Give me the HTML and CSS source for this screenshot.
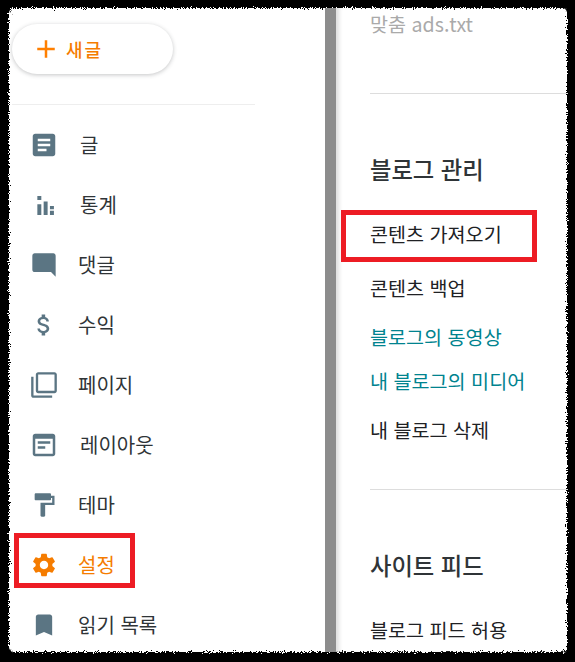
FILE: index.html
```html
<!DOCTYPE html>
<html lang="ko">
<head>
    <meta charset="UTF-8">
    <meta name="viewport" content="width=device-width, initial-scale=1.0">
    <title>설정</title>
    <link rel="stylesheet" href="styles.css">
</head>
<body>
    <svg class="defs" width="0" height="0">
        <filter id="rough" x="-5%" y="-5%" width="110%" height="110%">
            <feTurbulence type="fractalNoise" baseFrequency="0.9" numOctaves="2" seed="4"/>
            <feDisplacementMap in="SourceGraphic" scale="7"/>
        </filter>
    </svg>
    <div class="frame">
        <aside class="sidebar">
            <button class="new-post">
                <svg class="plus" viewBox="0 0 24 24"><path d="M19 13h-6v6h-2v-6H5v-2h6V5h2v6h6v2z"/></svg>
                <span>새글</span>
            </button>
            <hr class="side-line">
            <ul class="menu">
                <li class="wide">
                    <span class="icon"><svg class="big" viewBox="0 0 24 24"><path d="M19 3H5c-1.1 0-2 .9-2 2v14c0 1.1.9 2 2 2h14c1.1 0 2-.9 2-2V5c0-1.1-.9-2-2-2zm-5 14H7v-2h7v2zm3-4H7v-2h10v2zm0-4H7V7h10v2z"/></svg></span>
                    글
                </li>
                <li class="wide">
                    <span class="icon"><svg viewBox="0 0 24 24"><path d="M6.3 4.3h3.4v3.4H6.3zM6.3 11.4h3.4v9.2H6.3zM11.7 9h3.4v11.6h-3.4zM17.1 12.9h3.4v2.8h-3.4zM17.1 17h3.4v3.6h-3.4z"/></svg></span>
                    통계
                </li>
                <li>
                    <span class="icon"><svg viewBox="0 0 24 24"><path d="M21.99 4c0-1.1-.89-2-1.99-2H4c-1.1 0-2 .9-2 2v12c0 1.1.9 2 2 2h14l4 4-.01-18z"/></svg></span>
                    댓글
                </li>
                <li>
                    <span class="icon"><svg viewBox="0 0 24 24"><path d="M11.8 10.9c-2.27-.59-3-1.2-3-2.15 0-1.09 1.01-1.85 2.7-1.85 1.78 0 2.44.85 2.5 2.1h2.21c-.07-1.72-1.12-3.3-3.21-3.81V3h-3v2.16c-1.94.42-3.5 1.68-3.5 3.61 0 2.31 1.91 3.46 4.7 4.13 2.5.6 3 1.48 3 2.41 0 .69-.49 1.79-2.7 1.79-2.06 0-2.87-.92-2.98-2.1h-2.2c.12 2.19 1.76 3.42 3.68 3.83V21h3v-2.15c1.95-.37 3.5-1.5 3.5-3.55 0-2.84-2.43-3.81-4.7-4.4z"/></svg></span>
                    수익
                </li>
                <li>
                    <span class="icon"><svg viewBox="0 0 24 24"><path d="M3 5H1v16c0 1.1.9 2 2 2h16v-2H3V5zm18-4H7c-1.1 0-2 .9-2 2v14c0 1.1.9 2 2 2h14c1.1 0 2-.9 2-2V3c0-1.1-.9-2-2-2zm0 16H7V3h14v14z"/></svg></span>
                    페이지
                </li>
                <li class="wide">
                    <span class="icon"><svg class="big" viewBox="0 0 24 24"><path d="M19 3H5c-1.1 0-2 .9-2 2v14c0 1.1.9 2 2 2h14c1.1 0 2-.9 2-2V5c0-1.1-.9-2-2-2zm0 16H5V7h14v12zM7 9h10v2H7zM7 13h6v2H7z"/></svg></span>
                    레이아웃
                </li>
                <li>
                    <span class="icon"><svg viewBox="0 0 24 24"><path d="M18 4V3c0-.55-.45-1-1-1H5c-.55 0-1 .45-1 1v4c0 .55.45 1 1 1h12c.55 0 1-.45 1-1V6h1v4H9v11c0 .55.45 1 1 1h2c.55 0 1-.45 1-1v-9h8V4h-3z"/></svg></span>
                    테마
                </li>
                <li class="active">
                    <span class="icon"><svg viewBox="0 0 24 24"><path d="M19.14 12.94c.04-.3.06-.61.06-.94 0-.32-.02-.64-.07-.94l2.03-1.58c.18-.14.23-.41.12-.61l-1.92-3.32c-.12-.22-.37-.29-.59-.22l-2.39.96c-.5-.38-1.03-.7-1.62-.94l-.36-2.54c-.04-.24-.24-.41-.48-.41h-3.84c-.24 0-.43.17-.47.41l-.36 2.54c-.59.24-1.13.57-1.62.94l-2.39-.96c-.22-.08-.47 0-.59.22L2.74 8.87c-.12.21-.08.47.12.61l2.03 1.58c-.05.3-.09.63-.09.94s.02.64.07.94l-2.03 1.58c-.18.14-.23.41-.12.61l1.92 3.32c.12.22.37.29.59.22l2.39-.96c.5.38 1.03.7 1.62.94l.36 2.54c.05.24.24.41.48.41h3.84c.24 0 .44-.17.47-.41l.36-2.54c.59-.24 1.13-.56 1.62-.94l2.39.96c.22.08.47 0 .59-.22l1.92-3.32c.12-.22.07-.47-.12-.61l-2.01-1.58zM12 15.6c-1.98 0-3.6-1.62-3.6-3.6s1.62-3.6 3.6-3.6 3.6 1.62 3.6 3.6-1.62 3.6-3.6 3.6z"/></svg></span>
                    설정
                    <span class="mark mark-menu"></span>
                </li>
                <li>
                    <span class="icon"><svg viewBox="0 0 24 24"><path d="M17 3H7c-1.1 0-2 .9-2 2v16l7-3 7 3V5c0-1.1-.9-2-2-2z"/></svg></span>
                    읽기 목록
                </li>
            </ul>
        </aside>
        <div class="split"></div>
        <main class="panel">
            <p class="row muted">맞춤 ads.txt</p>
            <hr class="panel-line first">
            <h2 class="title">블로그 관리</h2>
            <ul class="links">
                <li class="l-import">콘텐츠 가져오기<span class="mark mark-import"></span></li>
                <li class="l-backup">콘텐츠 백업</li>
                <li class="l-video teal">블로그의 동영상</li>
                <li class="l-media teal">내 블로그의 미디어</li>
                <li class="l-delete">내 블로그 삭제</li>
            </ul>
            <hr class="panel-line second">
            <h2 class="title feed">사이트 피드</h2>
            <ul class="links">
                <li class="l-allow">블로그 피드 허용</li>
            </ul>
        </main>
    </div>
</body>
</html>
```

FILE: styles.css
```css
*{box-sizing: border-box;}
ul{list-style: none; margin: 0; padding: 0;}
html,body{height: 100%;}
body{
    margin: 0;
    background-color: #000;
    overflow: hidden;
    font-family: "Noto Sans CJK KR", "Noto Sans", sans-serif;
    color: #2f3437;
}
.defs{position: absolute;}

/* 흰 화면 + 찢어진 가장자리 */
.frame{
    position: relative;
    height: 662px;
    padding: 8px 8px 10px 10px;
    display: flex;
    overflow: hidden;
}
.frame::before{
    content: "";
    position: absolute;
    left: 9px;
    top: 8px;
    right: 8px;
    bottom: 10px;
    background-color: #fff;
    border-radius: 5px;
    filter: url(#rough);
}

/* 사이드바 */
.sidebar{
    position: relative;
    width: 315px;
    flex: none;
}
.new-post{
    display: flex;
    align-items: center;
    width: 161px;
    height: 50px;
    margin: 16px 0 0 2px;
    padding: 0 0 0 19px;
    border: 0;
    border-radius: 25px;
    background-color: #fff;
    box-shadow: 0 1px 4px rgba(60,64,67,.3);
    color: #f57c00;
    font-family: inherit;
    font-size: 18px;
    font-weight: 500;
    letter-spacing: 2px;
}
.new-post span{margin-left: 5px;}
.plus{width: 30px; height: 30px; fill: #ff7f00;}
.side-line{
    width: 243px;
    height: 1px;
    margin: 30px 0 0 2px;
    border: 0;
    background-color: #eee;
}
.menu{margin-top: 10px;}
.menu li{
    position: relative;
    display: flex;
    align-items: center;
    height: 60px;
    padding-left: 19px;
    padding-bottom: 2px;
    font-size: 20px;
}
.icon{
    display: flex;
    align-items: center;
    justify-content: center;
    width: 30px;
    height: 30px;
    margin: 2px 19px 0 0;
}
.wide .icon{margin-right: 21px;}
.icon svg{width: 28px; height: 28px; fill: #5b7583;}
.icon svg.big{width: 30px; height: 30px;}
.menu li.active{color: #f57c00;}
.menu li.active svg{fill: #f57c00;}

/* 빨간 표시 박스 */
.mark{
    position: absolute;
    border: 5px solid #ed1c24;
}
.mark-menu{
    left: 4px;
    top: -2px;
    width: 121px;
    height: 55px;
}
.mark-import{
    left: -29px;
    top: -11px;
    width: 196px;
    height: 52px;
}

/* 가운데 회색 막대 */
.split{
    position: relative;
    width: 11px;
    flex: none;
    background-color: #8c8c8c;
}

/* 오른쪽 설정 패널 */
.panel{
    position: relative;
    flex: 1;
    min-width: 0;
    padding-left: 34px;
    box-shadow: inset 5px 0 4px -2px #ddd;
}
.row{margin: 0;}
.muted{
    margin-top: 3px;
    height: 26px;
    line-height: 26px;
    font-size: 19.6px;
    color: #aaa;
}
.panel-line{
    height: 1px;
    margin: 0 -1px 0 0;
    border: 0;
    background-color: #ddd;
}
.panel-line.first{margin-top: 56px;}
.title{
    margin: 59px 0 0;
    height: 32px;
    line-height: 32px;
    font-size: 23.3px;
    font-weight: 500;
    color: #2f3437;
}
.title.feed{margin-top: 59px;}
.links li{
    position: relative;
    height: 26px;
    line-height: 26px;
    font-size: 19.6px;
    color: #202124;
}
.l-import{margin-top: 36px;}
.l-backup{margin-top: 28px;}
.l-video{margin-top: 23px;}
.l-media{margin-top: 18px;}
.l-delete{margin-top: 23px;}
.l-allow{margin-top: 36px;}
.links .teal{color: #00838f;}
.panel-line.second{margin-top: 46px;}
```
